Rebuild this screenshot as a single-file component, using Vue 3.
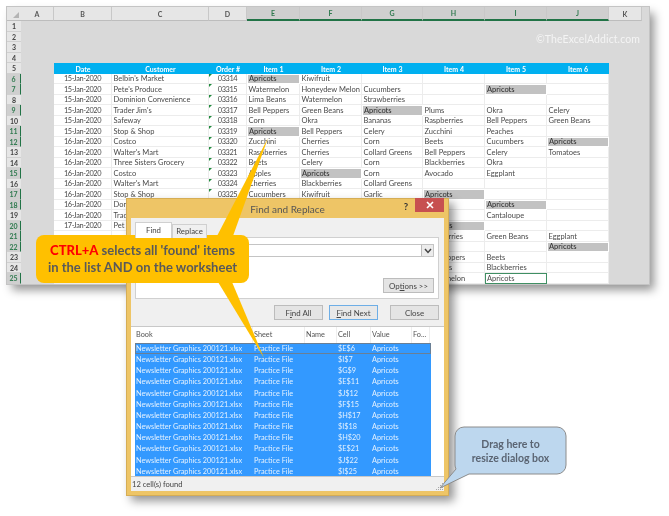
<script setup>
const columns = ['A', 'B', 'C', 'D', 'E', 'F', 'G', 'H', 'I', 'J', 'K']
const activeCols = ['E', 'F', 'G', 'H', 'I', 'J']
const activeRows = [6, 7, 9, 11, 12, 15, 17, 18, 20, 21, 22, 25]
const hit = 'Apricots'
const d15 = '15-Jan-2020'
const d16 = '16-Jan-2020'
const d17 = '17-Jan-2020'
const raw = [
  [d15, "Belbin's Market", '03314', hit, 'Kiwifruit', '', '', '', ''],
  [d15, "Pete's Produce", '03315', 'Watermelon', 'Honeydew Melon', 'Cucumbers', '', hit, ''],
  [d15, 'Dominion Convenience', '03316', 'Lima Beans', 'Watermelon', 'Strawberries', '', '', ''],
  [d15, "Trader Jim's", '03317', 'Bell Peppers', 'Green Beans', hit, 'Plums', 'Okra', 'Celery'],
  [d15, 'Safeway', '03318', 'Corn', 'Okra', 'Bananas', 'Raspberries', 'Bell Peppers', 'Green Beans'],
  [d15, 'Stop & Shop', '03319', hit, 'Bell Peppers', 'Celery', 'Zucchini', 'Peaches', ''],
  [d16, 'Costco', '03320', 'Zucchini', 'Cherries', 'Corn', 'Beets', 'Cucumbers', hit],
  [d16, "Walter's Mart", '03321', 'Raspberries', 'Cherries', 'Collard Greens', 'Bell Peppers', 'Celery', 'Tomatoes'],
  [d16, 'Three Sisters Grocery', '03322', 'Beets', 'Celery', 'Corn', 'Blackberries', 'Okra', ''],
  [d16, 'Costco', '03323', 'Apples', hit, 'Corn', 'Avocado', 'Eggplant', ''],
  [d16, "Walter's Mart", '03324', 'Cherries', 'Blackberries', 'Collard Greens', '', '', ''],
  [d16, 'Stop & Shop', '03325', 'Cucumbers', 'Kiwifruit', 'Garlic', hit, '', ''],
  [d16, 'Don', '', '', '', '', '', hit, ''],
  [d16, 'Trad', '', '', '', '', '', 'Cantaloupe', ''],
  [d17, 'Pet', '', '', '', '', hit, '', ''],
  ['', '', '', '', '', '', 'Raspberries', 'Green Beans', 'Eggplant'],
  ['', '', '', '', '', '', '', '', hit],
  ['', '', '', '', '', '', 'Bell Peppers', 'Beets', ''],
  ['', '', '', '', '', '', 'Cherries', 'Blackberries', ''],
  ['', '', '', '', '', '', 'Watermelon', hit, '']
]
const headers = ['Date', 'Customer', 'Order #', 'Item 1', 'Item 2', 'Item 3', 'Item 4', 'Item 5', 'Item 6']
const emptyRows = [1, 2, 3, 4]
const rows = raw.map((cells, i) => ({ n: i + 6, cells }))
const found = ['$E$6', '$I$7', '$G$9', '$E$11', '$J$12', '$F$15', '$H$17', '$I$18', '$H$20', '$E$21', '$J$22', '$I$25']
function cellClass(c, j, n) {
  const current = n === 25 && j === 7
  return {
    center: j === 0 || j === 2,
    order: j === 2 && c !== '',
    hit: c === hit && !current,
    current
  }
}
</script>

<template>
  <div class="page">
    <section class="sheet">
      <div class="corner"><i></i></div>
      <div
        v-for="c in columns"
        :key="c"
        class="colhead"
        :class="{ on: activeCols.includes(c) }"
      >{{ c }}</div>
      <div class="colhead blank"></div>

      <template v-for="n in emptyRows" :key="n">
        <div class="rowhead">{{ n }}</div>
        <div class="gray wide"></div>
      </template>

      <div class="rowhead">5</div>
      <div class="gray"></div>
      <div v-for="h in headers" :key="h" class="th">{{ h }}</div>
      <div class="gray"></div>
      <div class="gray"></div>

      <template v-for="r in rows" :key="r.n">
        <div class="rowhead" :class="{ on: activeRows.includes(r.n) }">{{ r.n }}</div>
        <div class="gray"></div>
        <div
          v-for="(c, j) in r.cells"
          :key="j"
          class="td"
          :class="cellClass(c, j, r.n)"
        ><span>{{ c }}</span></div>
        <div class="gray"></div>
        <div class="gray"></div>
      </template>

      <div class="watermark">©TheExcelAddict.com</div>
    </section>

    <section class="dialog">
      <header class="titlebar">
        <span class="title">Find and Replace</span>
        <span class="help">?</span>
        <span class="close">
          <svg width="8" height="8" viewBox="0 0 8 8"><path d="M1 1 7 7M7 1 1 7" stroke="#fff" stroke-width="1.6" fill="none" /></svg>
        </span>
      </header>
      <div class="dbody">
        <div class="tabs">
          <span class="tab sel">Find</span>
          <span class="tab">Replace</span>
        </div>
        <div class="panel">
          <div class="whatrow">
            <div class="combo">
              <span class="drop">
                <svg width="8" height="6" viewBox="0 0 8 6"><path d="M1 1 4 4.4 7 1" stroke="#444" stroke-width="1.5" fill="none" /></svg>
              </span>
            </div>
          </div>
          <div class="optrow"><button class="btn opt">Op<u>t</u>ions &gt;&gt;</button></div>
        </div>
        <div class="actions">
          <button class="btn">F<u>i</u>nd All</button>
          <button class="btn primary"><u>F</u>ind Next</button>
          <button class="btn last">Close</button>
        </div>
        <div class="list">
          <div class="lrow lhead">
            <span>Book</span><span>Sheet</span><span>Name</span><span>Cell</span><span>Value</span><span>Fo...</span>
          </div>
          <div v-for="(cell, i) in found" :key="cell" class="lrow item" :class="{ first: i === 0 }">
            <span>Newsletter Graphics 200121.xlsx</span><span>Practice File</span><span></span><span>{{ cell }}</span><span>Apricots</span><span></span>
          </div>
        </div>
        <footer class="status">
          <span>12 cell(s) found</span>
          <svg class="grip" width="9" height="9" viewBox="0 0 9 9"><path d="M7 1h1v1H7zM5 3h1v1H5zM7 3h1v1H7zM3 5h1v1H3zM5 5h1v1H5zM7 5h1v1H7zM1 7h1v1H1zM3 7h1v1H3zM5 7h1v1H5zM7 7h1v1H7z" fill="#a8a8a8" /></svg>
        </footer>
      </div>
    </section>

    <svg class="tails" width="669" height="516" viewBox="0 0 669 516">
      <polygon points="268,138 217,236 233,236" fill="#ffc000" />
      <polygon points="218,282 232,282 264,358" fill="#ffc000" />
      <path
        d="M464 427H557A9 9 0 0 1 566 436V465A9 9 0 0 1 557 474H469L440 488L456 469Q455 467 455 465V436A9 9 0 0 1 464 427Z"
        fill="#bdd7ee"
        stroke="#8c8c8c"
      />
    </svg>

    <div class="callout">
      <div><b class="red">CTRL+A</b> selects all 'found' items</div>
      <div>in the list AND on the worksheet</div>
    </div>

    <div class="bluetext">
      <div>Drag here to</div>
      <div>resize dialog box</div>
    </div>
  </div>
</template>

<style scoped>
.page {
  position: relative;
  width: 669px;
  height: 516px;
  overflow: hidden;
  background: #fff;
  font-family: "Lato", "Open Sans", sans-serif;
  color: #444;
  filter: blur(0.45px);
}
.sheet {
  position: absolute;
  left: 7px;
  top: 7px;
  display: grid;
  grid-template-columns: 14px 33px 58px 97px 38px 53px 62px 61px 62px 62px 62px 33px 7px;
  grid-template-rows: 14.4px repeat(25, 10.5px);
  width: 642px;
  background: #d9d9d9;
  font-size: 7.5px;
  line-height: 10px;
  outline: 1px solid #c4c4c4;
  box-shadow: 5px 6px 9px rgba(0, 0, 0, 0.42);
}
.corner {
  background: #e6e6e6;
  border-bottom: 1px solid #bdbdbd;
  position: relative;
}
.corner i {
  position: absolute;
  right: 2px;
  bottom: 2px;
  border-left: 6px solid transparent;
  border-bottom: 6px solid #b4b4b4;
}
.colhead {
  display: flex;
  align-items: center;
  justify-content: center;
  background: #e6e6e6;
  border-right: 1px solid #c8c8c8;
  border-bottom: 1px solid #bdbdbd;
  color: #555;
  font-weight: 700;
  font-size: 7px;
}
.colhead.on {
  background: #cfcfcf;
  color: #2f7a4f;
  border-bottom: 2px solid #217346;
}
.colhead.blank {
  background: #d9d9d9;
  border: 0;
}
.rowhead {
  display: flex;
  align-items: center;
  justify-content: center;
  background: #e6e6e6;
  border-bottom: 1px solid #d0d0d0;
  color: #444;
  font-weight: 700;
  font-size: 7px;
}
.rowhead.on {
  background: #cfcfcf;
  color: #2f7a4f;
  border-right: 1.5px solid #217346;
}
.gray {
  background: #d9d9d9;
}
.gray.wide {
  grid-column: 2 / -1;
}
.th {
  display: flex;
  align-items: center;
  justify-content: center;
  background: #00b0f0;
  color: #fff;
  font-weight: 700;
  font-size: 7px;
}
.td {
  display: flex;
  align-items: center;
  box-sizing: border-box;
  padding-top: 1px;
  padding-left: 1.5px;
  overflow: hidden;
  white-space: nowrap;
  background: #fff;
  border-right: 1px solid #ececec;
  border-bottom: 1px solid #ececec;
  color: #4a4a4a;
}
.td.center {
  justify-content: center;
  padding-left: 0;
  font-size: 7.4px;
  letter-spacing: -0.4px;
}
.td.order {
  position: relative;
}
.td.order::before {
  content: "";
  position: absolute;
  left: 0;
  top: 0;
  border-top: 3px solid #1f8a3c;
  border-right: 3px solid transparent;
}
.td.hit {
  background: #c2c2c2;
  color: #333;
  font-weight: 500;
  border: 1px solid #fff;
  padding-top: 0;
  padding-left: 1px;
}
.td.current {
  border: 1px solid #3f8f63;
  padding-top: 0;
  padding-left: 1px;
}
.watermark {
  position: absolute;
  left: 529px;
  top: 26px;
  color: #f4f4f4;
  font-size: 10.5px;
  line-height: 13px;
  letter-spacing: 0.1px;
}

.dialog {
  position: absolute;
  left: 126px;
  top: 198px;
  width: 323px;
  height: 298px;
  box-sizing: border-box;
  display: flex;
  flex-direction: column;
  background: #eec566;
  border: 1px solid #d5ad55;
  box-shadow: 5px 5px 9px rgba(0, 0, 0, 0.42);
}
.titlebar {
  position: relative;
  height: 19px;
  flex: none;
  display: flex;
  align-items: center;
  justify-content: center;
}
.title {
  font-size: 10px;
  color: #555;
}
.help {
  position: absolute;
  right: 40px;
  top: 2px;
  font-weight: 700;
  font-size: 9.5px;
  color: #333;
}
.close {
  position: absolute;
  right: 4px;
  top: -1px;
  width: 29px;
  height: 14px;
  display: flex;
  align-items: center;
  justify-content: center;
  background: #c75050;
}
.dbody {
  flex: 1;
  margin: 0 4px 4px;
  display: flex;
  flex-direction: column;
  background: #f0f0f0;
  box-sizing: border-box;
  min-height: 0;
}
.tabs {
  display: flex;
  height: 15px;
  margin: 5px 0 0 4px;
  align-items: flex-end;
  flex: none;
  position: relative;
  z-index: 1;
}
.tab {
  box-sizing: border-box;
  width: 35px;
  height: 14px;
  border: 1px solid #d0d0d0;
  border-bottom: 0;
  font-size: 7.8px;
  line-height: 13px;
  text-align: center;
  background: #f0f0f0;
}
.tab.sel {
  width: 37px;
  height: 16px;
  background: #fff;
  line-height: 14px;
}
.panel {
  box-sizing: border-box;
  height: 62px;
  margin: -1px 5px 0 4px;
  padding: 6px 4px 5px 60px;
  flex: none;
  display: flex;
  flex-direction: column;
  justify-content: space-between;
  border: 1px solid #d0d0d0;
  background: #fff;
}
.whatrow {
  display: flex;
  align-items: center;
}
.combo {
  flex: 1;
  height: 13px;
  box-sizing: border-box;
  border: 1px solid #c4c4c4;
  display: flex;
  justify-content: flex-end;
  background: #fff;
}
.drop {
  width: 11px;
  display: flex;
  align-items: center;
  justify-content: center;
  background: #ececec;
  border-left: 1px solid #bbb;
}
.optrow {
  display: flex;
  justify-content: flex-end;
}
.btn {
  box-sizing: border-box;
  width: 49px;
  height: 15px;
  padding: 0;
  border: 1px solid #bcbcbc;
  background: #e4e4e4;
  font-family: inherit;
  font-size: 7.9px;
  color: #444;
}
.btn.opt {
  width: 51px;
}
.btn.primary {
  border-color: #6eaee6;
  margin-left: 6px;
  background: #e8e8e8;
}
.btn.last {
  margin-left: 12px;
}
.actions {
  display: flex;
  margin: 6px 0 0 143px;
  flex: none;
}
.list {
  flex: 1;
  margin-top: 6px;
  background: #fff;
  border-top: 1px solid #c8c8c8;
  min-height: 0;
  padding-left: 4px;
}
.lrow {
  display: grid;
  grid-template-columns: 118px 52px 32px 34px 41px 18px;
  width: 296px;
  height: 11.17px;
  line-height: 11px;
  font-size: 7.3px;
  white-space: nowrap;
}
.lrow span {
  padding-left: 1px;
}
.lhead {
  height: 16px;
  line-height: 16px;
  color: #555;
}
.lhead span {
  border-right: 1px solid #eeeeee;
}
.item {
  background: #3399ff;
  color: #e3f1ff;
}
.item.first {
  outline: 1px solid #6a7f95;
  outline-offset: -1px;
}
.status {
  position: relative;
  flex: none;
  height: 14px;
  line-height: 14px;
  padding-left: 1px;
  font-size: 7.6px;
  color: #444;
  border-top: 1px solid #c8c8c8;
}
.grip {
  position: absolute;
  right: 0;
  bottom: 0;
}

.tails {
  position: absolute;
  left: 0;
  top: 0;
}
.callout {
  position: absolute;
  left: 36px;
  top: 235px;
  width: 213px;
  height: 48px;
  box-sizing: border-box;
  padding-top: 6.5px;
  border-radius: 8px;
  background: #ffc000;
  color: #595959;
  font-weight: 700;
  font-size: 13px;
  line-height: 17.6px;
  text-align: center;
  white-space: nowrap;
}
.red {
  color: #ff0000;
}
.bluetext {
  position: absolute;
  left: 455px;
  top: 436.5px;
  width: 111px;
  text-align: center;
  font-weight: 700;
  font-size: 10.5px;
  line-height: 14px;
  color: #5a6472;
}
</style>
